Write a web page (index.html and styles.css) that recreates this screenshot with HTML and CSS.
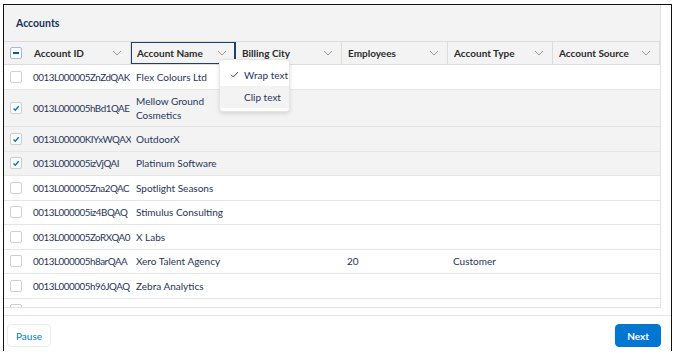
FILE: index.html
```html
<!DOCTYPE html>
<html lang="en">
  <head>
    <meta charset="UTF-8" />
    <meta name="viewport" content="width=device-width, initial-scale=1.0" />
    <title>Accounts</title>
    <link rel="stylesheet" href="styles.css">
  </head>
  <body>
    <div class="frame">
      <div class="card">
        <div class="card-title">Accounts</div>

        <div class="table">
          <div class="row head">
            <div class="cell check"><span class="cb minus"></span></div>
            <div class="cell th"><span>Account ID</span><svg class="chev" viewBox="0 0 10 6"><path d="M1 1l4 4 4-4"/></svg></div>
            <div class="cell th focus"><span>Account Name</span><svg class="chev" viewBox="0 0 10 6"><path d="M1 1l4 4 4-4"/></svg></div>
            <div class="cell th"><span>Billing City</span><svg class="chev" viewBox="0 0 10 6"><path d="M1 1l4 4 4-4"/></svg></div>
            <div class="cell th"><span>Employees</span><svg class="chev" viewBox="0 0 10 6"><path d="M1 1l4 4 4-4"/></svg></div>
            <div class="cell th"><span>Account Type</span><svg class="chev" viewBox="0 0 10 6"><path d="M1 1l4 4 4-4"/></svg></div>
            <div class="cell th"><span>Account Source</span><svg class="chev" viewBox="0 0 10 6"><path d="M1 1l4 4 4-4"/></svg></div>
          </div>

          <div class="row">
            <div class="cell check"><span class="cb"></span></div>
            <div class="cell id">0013L000005ZnZdQAK</div>
            <div class="cell">Flex Colours Ltd</div>
            <div class="cell"></div><div class="cell"></div><div class="cell"></div><div class="cell"></div>
          </div>
          <div class="row selected tall">
            <div class="cell check"><span class="cb on"><svg viewBox="0 0 10 10"><path d="M2.5 5.5l1.8 1.8 3.4-4"/></svg></span></div>
            <div class="cell id">0013L000005hBd1QAE</div>
            <div class="cell wrap">Mellow Ground Cosmetics</div>
            <div class="cell"></div><div class="cell"></div><div class="cell"></div><div class="cell"></div>
          </div>
          <div class="row selected">
            <div class="cell check"><span class="cb on"><svg viewBox="0 0 10 10"><path d="M2.5 5.5l1.8 1.8 3.4-4"/></svg></span></div>
            <div class="cell id">0013L00000KIYxWQAX</div>
            <div class="cell">OutdoorX</div>
            <div class="cell"></div><div class="cell"></div><div class="cell"></div><div class="cell"></div>
          </div>
          <div class="row selected">
            <div class="cell check"><span class="cb on"><svg viewBox="0 0 10 10"><path d="M2.5 5.5l1.8 1.8 3.4-4"/></svg></span></div>
            <div class="cell id">0013L000005izVjQAI</div>
            <div class="cell">Platinum Software</div>
            <div class="cell"></div><div class="cell"></div><div class="cell"></div><div class="cell"></div>
          </div>
          <div class="row">
            <div class="cell check"><span class="cb"></span></div>
            <div class="cell id">0013L000005Zna2QAC</div>
            <div class="cell">Spotlight Seasons</div>
            <div class="cell"></div><div class="cell"></div><div class="cell"></div><div class="cell"></div>
          </div>
          <div class="row">
            <div class="cell check"><span class="cb"></span></div>
            <div class="cell id">0013L000005iz4BQAQ</div>
            <div class="cell">Stimulus Consulting</div>
            <div class="cell"></div><div class="cell"></div><div class="cell"></div><div class="cell"></div>
          </div>
          <div class="row">
            <div class="cell check"><span class="cb"></span></div>
            <div class="cell id">0013L000005ZoRXQA0</div>
            <div class="cell">X Labs</div>
            <div class="cell"></div><div class="cell"></div><div class="cell"></div><div class="cell"></div>
          </div>
          <div class="row">
            <div class="cell check"><span class="cb"></span></div>
            <div class="cell id">0013L000005h8arQAA</div>
            <div class="cell">Xero Talent Agency</div>
            <div class="cell"></div>
            <div class="cell">20</div>
            <div class="cell">Customer</div>
            <div class="cell"></div>
          </div>
          <div class="row">
            <div class="cell check"><span class="cb"></span></div>
            <div class="cell id">0013L000005h96JQAQ</div>
            <div class="cell">Zebra Analytics</div>
            <div class="cell"></div><div class="cell"></div><div class="cell"></div><div class="cell"></div>
          </div>
          <div class="row">
            <div class="cell check"><span class="cb"></span></div>
            <div class="cell id">0013L000005hKdXQAU</div>
            <div class="cell">Zeta Growth</div>
            <div class="cell"></div><div class="cell"></div><div class="cell"></div><div class="cell"></div>
          </div>
        </div>

        <div class="menu">
          <div class="menu-item"><svg class="tick" viewBox="0 0 10 8"><path d="M1 4.2l2.6 2.6L9 1.2"/></svg>Wrap text</div>
          <div class="menu-item hover">Clip text</div>
        </div>
      </div>

      <div class="footer">
        <button class="btn pause">Pause</button>
        <button class="btn next">Next</button>
      </div>
    </div>
  </body>
</html>
```

FILE: styles.css
```css
body {
  margin: 0;
  background: #fff;
  font-family: Lato, "Liberation Sans", sans-serif;
  font-size: 10px;
  color: #26355a;
}

.frame {
  margin: 4px 0 0 3px;
  width: 667px;
  height: 346px;
  border: 1px solid #111;
  border-bottom: none;
}

.card {
  position: relative;
  width: 656px;
  height: 302px;
  border-right: 1px solid #e2e2e2;
  border-bottom: 1px solid #e2e2e2;
  background: #fff;
}

.card-title {
  height: 36px;
  display: flex;
  align-items: center;
  padding-left: 12px;
  background: #f3f3f3;
  font-weight: 700;
  font-size: 10.5px;
  color: #16325c;
}

.table {
  height: 266px;
  overflow: hidden;
}

.row {
  display: grid;
  grid-template-columns: 24px 103px 105px 106px 106px 105px 107px;
  height: 24.5px;
  box-sizing: border-box;
  border-bottom: 1px solid #e5e5e5;
}

.row.head {
  height: 24px;
  background: #f3f3f3;
  border-top: 1px solid #dcdcdc;
  border-bottom: 1px solid #dcdcdc;
}

.row.tall {
  height: 37.5px;
}

.row.selected {
  background: #f3f3f3;
}

.cell {
  display: flex;
  align-items: center;
  padding: 0 5px;
  white-space: nowrap;
  overflow: hidden;
}

.cell.id {
  padding-right: 0;
  font-size: 9.8px;
  letter-spacing: -0.45px;
}

.cell.wrap {
  white-space: normal;
  line-height: 14px;
}

.cell.check {
  padding: 0 0 0 6px;
}

.th {
  justify-content: space-between;
  font-weight: 700;
  color: #2b2b2b;
  border-right: 1px solid #dcdcdc;
  padding: 0 8px 0 6px;
  box-sizing: border-box;
}

.th.focus {
  box-shadow: inset 0 0 0 1px #1d3f73;
  border-right: 1px solid #1d3f73;
}

.chev {
  width: 10px;
  height: 6px;
  flex: none;
  fill: none;
  stroke: #9a9a9a;
  stroke-width: 1;
}

.cb {
  width: 12px;
  height: 12px;
  box-sizing: border-box;
  border: 1px solid #cfcfcf;
  border-radius: 2px;
  background: #fff;
  display: flex;
  align-items: center;
  justify-content: center;
}

.cb svg {
  width: 10px;
  height: 10px;
  fill: none;
  stroke: #0176d3;
  stroke-width: 1.4;
}

.cb.minus {
  border-color: #9dbbe0;
}

.cb.minus::after {
  content: "";
  width: 6px;
  height: 2px;
  background: #0b5cab;
}

.menu {
  position: absolute;
  left: 215px;
  top: 54px;
  width: 69px;
  padding: 4px 0 3px;
  background: #fff;
  border: 1px solid #e5e5e5;
  border-radius: 4px;
  box-shadow: 0 2px 4px rgba(0, 0, 0, 0.12);
  font-size: 10px;
  white-space: nowrap;
}

.menu-item {
  height: 22px;
  display: flex;
  align-items: center;
  padding-left: 24px;
  position: relative;
}

.menu-item.hover {
  background: #f3f3f3;
}

.tick {
  position: absolute;
  left: 10px;
  top: 7px;
  width: 9px;
  height: 7px;
  fill: none;
  stroke: #26355a;
  stroke-width: 1.1;
}

.footer {
  margin-top: 7px;
  border-top: 1px solid #e5e5e5;
  display: flex;
  justify-content: space-between;
  padding: 8px 10px 0 3px;
}

.btn {
  height: 23px;
  padding: 0 8px;
  font-family: inherit;
  font-size: 10px;
  border-radius: 4px;
  cursor: pointer;
}

.btn.pause {
  background: #fff;
  border: 1px solid #ececec;
  color: #0176d3;
}

.btn.next {
  background: #0176d3;
  border: 1px solid #0176d3;
  color: #fff;
  font-weight: 700;
  padding: 0 11px;
}
```
